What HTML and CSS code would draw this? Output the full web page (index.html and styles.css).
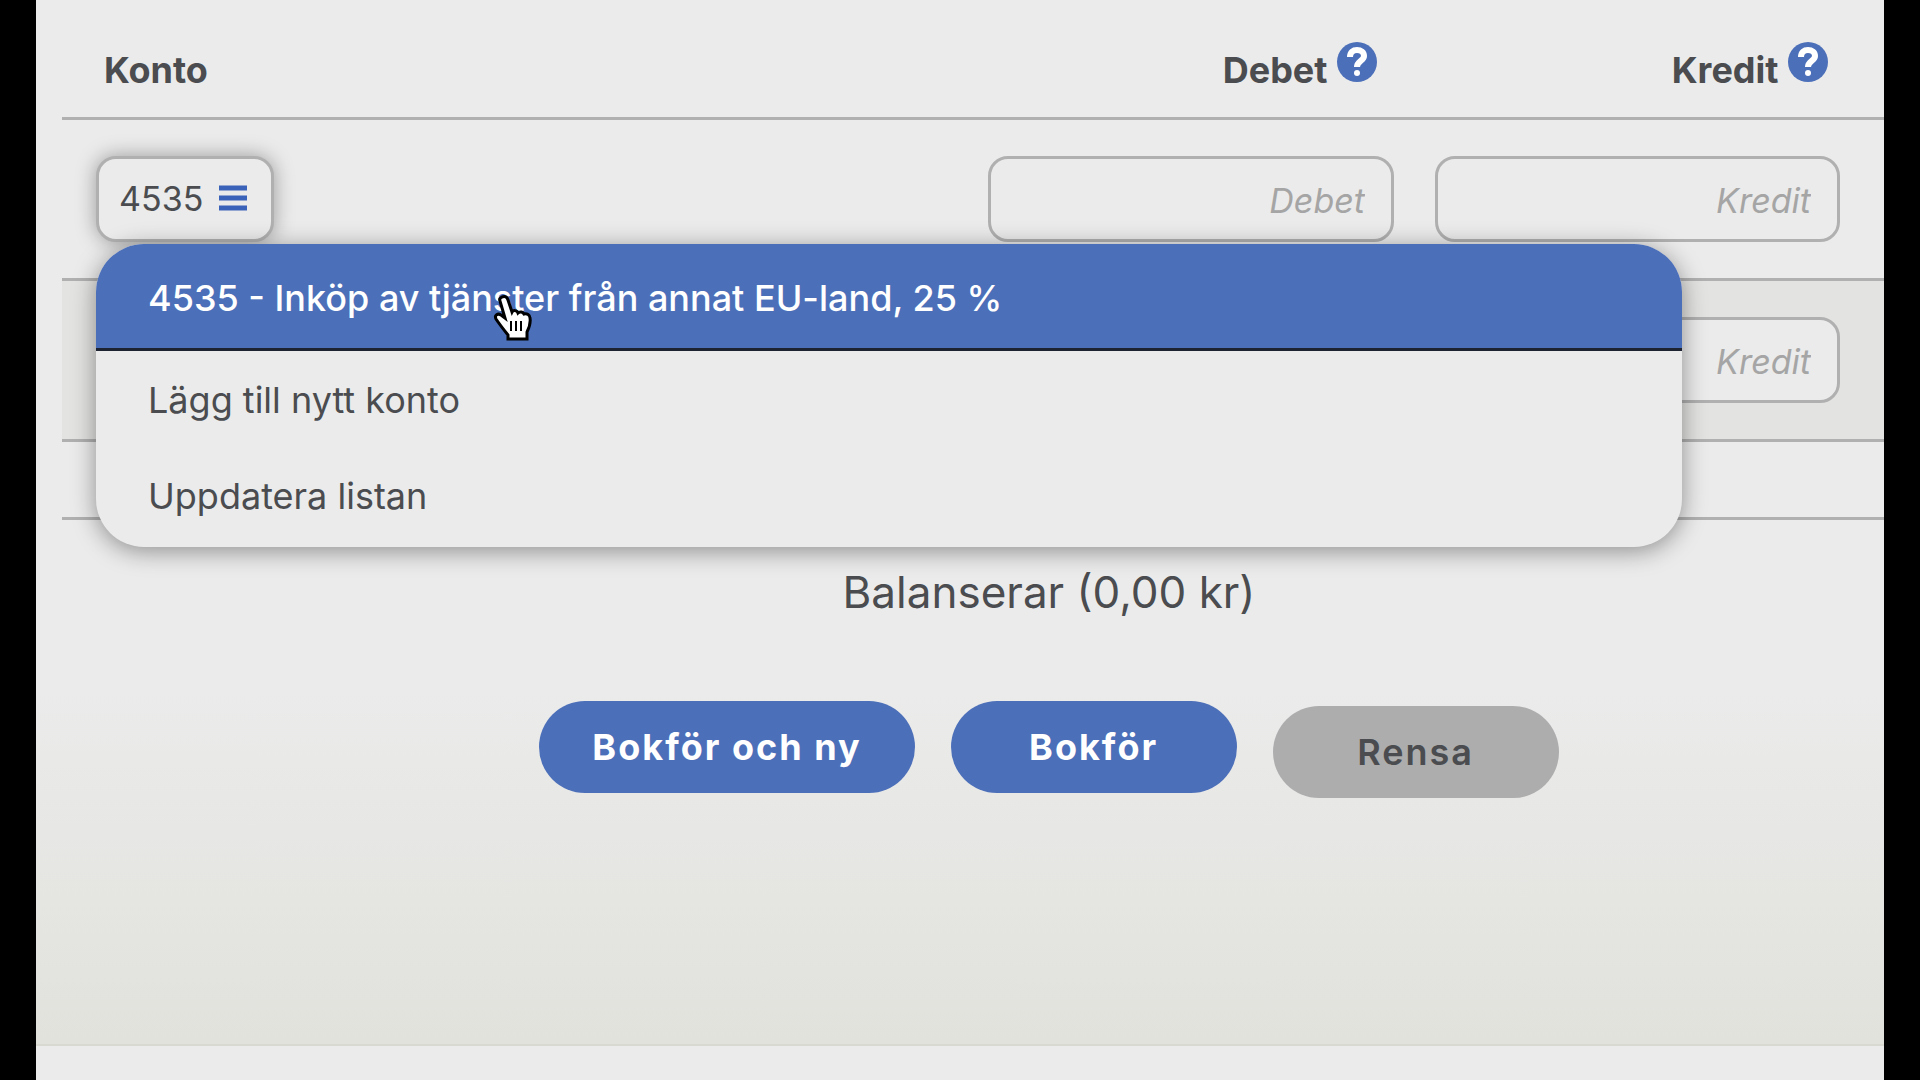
FILE: index.html
```
<!DOCTYPE html>
<html lang="sv">
    <head>
        <title>Bokför</title>
        <meta charset="utf-8" />
        <meta name="viewport" content="width=device-width, initial-scale=1.0" />
        <link rel="stylesheet" href="styles.css">
    </head>
    <body>
        <form id="main">
            <table id="rows">
                <thead>
                    <tr>
                        <th class="konto" scope="col">Konto</th>
                        <th class="debet" scope="col">Debet
                            <svg class="help" viewBox="0 0 42 42" role="img" aria-label="Hjälp">
                                <circle cx="21" cy="21" r="20" />
                                <path d="M14 16C14 11 17 9 21 9c4 0 7 2 7 6 0 5-7 5-7 11" />
                                <circle class="dot" cx="21" cy="32" r="3" />
                            </svg>
                        </th>
                        <th class="kredit" scope="col">Kredit
                            <svg class="help" viewBox="0 0 42 42" role="img" aria-label="Hjälp">
                                <circle cx="21" cy="21" r="20" />
                                <path d="M14 16C14 11 17 9 21 9c4 0 7 2 7 6 0 5-7 5-7 11" />
                                <circle class="dot" cx="21" cy="32" r="3" />
                            </svg>
                        </th>
                    </tr>
                </thead>
                <tbody>
                    <tr class="open">
                        <td>
                            <button class="account" type="button">4535
                                <svg width="28" height="28" viewBox="0 0 28 28">
                                    <path d="M0 4h28M0 14h28M0 24h28" />
                                </svg>
                            </button>
                            <div class="menu">
                                <button class="active" type="button">4535 - Inköp av tjänster från annat EU-land, 25 %</button>
                                <button type="button">Lägg till nytt konto</button>
                                <button type="button">Uppdatera listan</button>
                                <svg class="pointer" viewBox="0 0 40 48">
                                    <path d="M9 3c3-1 5 0 6 3l4 12c1-2 5-2 6 1 2-2 5-1 6 1 3-1 6 1 6 4 1 6-1 10-3 14v7H15v-4C11 36 7 31 3 25c-2-4 2-6 5-4l4 3L7 7c-1-2 0-3 2-4z" />
                                    <path class="finger" d="M18 27v10M23 27v10M28 27v10" />
                                </svg>
                            </div>
                        </td>
                        <td class="debet"><input type="text" placeholder="Debet" aria-label="Debet" /></td>
                        <td class="kredit"><input type="text" placeholder="Kredit" aria-label="Kredit" /></td>
                    </tr>
                    <tr class="odd">
                        <td></td>
                        <td class="debet"><input type="text" placeholder="Debet" aria-label="Debet" /></td>
                        <td class="kredit"><input type="text" placeholder="Kredit" aria-label="Kredit" /></td>
                    </tr>
                    <tr class="sum">
                        <td colspan="3"></td>
                    </tr>
                </tbody>
            </table>
            <div id="footer">
                <p id="balance">Balanserar (0,00 kr)</p>
                <div id="buttons">
                    <button class="save" type="button">Bokför och ny</button>
                    <button class="save" type="button">Bokför</button>
                    <button class="clear" type="reset">Rensa</button>
                </div>
            </div>
        </form>
    </body>
</html>
```
FILE: styles.css
```
* {
    box-sizing: border-box;
}
html, body {
    margin: 0px;
    padding: 0px;
    min-height: 100vh;
    background: black;
    color: #4a4c4f;
    font-family: Inter, "Liberation Sans", sans-serif;
    font-size: 36px;
}
body {
    display: flex;
    flex-direction: column;
    padding: 0px 36px;
}
body:after {
    content: "";
    flex: 1;
    background: #ebebeb;
}
button, input {
    margin: 0px;
    color: inherit;
    font-family: inherit;
    font-size: inherit;
}
button {
    cursor: pointer;
}
#main {
    padding-left: 26px;
    border-bottom: 2px solid #d8dad2;
    background: linear-gradient(#ebebeb 66%, #e1e2dc);
}
#rows {
    width: 100%;
    border-collapse: separate;
    border-spacing: 0px;
    table-layout: fixed;
}
th, td {
    padding: 0px;
    border-bottom: 3px solid #b0b0b0;
    text-align: left;
}
th {
    height: 120px;
    padding-bottom: 24px;
    vertical-align: bottom;
    font-weight: 700;
    line-height: 46px;
}
td {
    height: 161px;
    padding-left: 34px;
}
th.konto {
    padding-left: 42px;
}
.debet {
    width: 447px;
    padding-left: 20px;
    padding-right: 21px;
}
.kredit {
    width: 469px;
    padding-left: 20px;
    padding-right: 44px;
}
th.debet {
    padding-right: 37px;
    text-align: right;
}
th.kredit {
    padding-right: 55px;
    text-align: right;
}
.help {
    width: 42px;
    height: 42px;
    fill: #4c6fb9;
}
.help path {
    fill: none;
    stroke: white;
    stroke-width: 6;
}
.help .dot {
    fill: white;
}
.odd td {
    background: #e3e4e1;
}
.sum td {
    height: 78px;
}
input {
    display: block;
    width: 100%;
    height: 86px;
    padding: 2px 26px 0px;
    border: 3px solid #b0b0b0;
    border-radius: 20px;
    outline: 0;
    background: #ebebeb;
    text-align: right;
    font-size: 34px;
}
input::placeholder {
    color: #a5a5a5;
    font-style: italic;
    opacity: 1;
}
.account {
    display: flex;
    align-items: center;
    gap: 16px;
    height: 86px;
    padding: 0px 24px 2px 20px;
    border: 3px solid #b0b0b0;
    border-radius: 20px;
    background: #ebebeb;
    box-shadow: 0px 0px 20px rgba(0, 0, 0, 0.35);
    font-size: 34px;
}
.account path {
    stroke: #3a62b8;
    stroke-width: 5;
}
.open {
    position: relative;
}
.menu {
    position: absolute;
    z-index: 1;
    top: 124px;
    left: 34px;
    right: 202px;
    padding-bottom: 4px;
    border-radius: 48px;
    background: #ebebeb;
    box-shadow: 0px 4px 24px rgba(0, 0, 0, 0.4);
}
.menu button {
    display: block;
    width: 100%;
    height: 96px;
    padding: 2px 52px 0px;
    border: none;
    background: none;
    text-align: left;
}
.menu .active {
    height: 107px;
    padding-top: 4px;
    border-bottom: 3px solid #1d2330;
    border-radius: 48px 48px 0px 0px;
    background: #4c6fb9;
    color: white;
    font-weight: 500;
}
.pointer {
    position: absolute;
    top: 50px;
    left: 397px;
    width: 40px;
    height: 48px;
    fill: white;
    stroke: black;
    stroke-width: 3;
}
.pointer .finger {
    stroke-width: 2;
}
#footer {
    padding: 44px 0px 246px 152px;
    text-align: center;
}
#balance {
    margin: 0px 0px 81px;
    line-height: 56px;
    font-size: 44px;
}
#buttons {
    display: flex;
    justify-content: center;
    align-items: flex-end;
    gap: 36px;
}
#buttons button {
    min-width: 286px;
    height: 92px;
    padding: 0px 53px;
    border: none;
    border-radius: 46px;
    font-weight: 600;
    letter-spacing: 2px;
}
#buttons .save {
    margin-bottom: 5px;
    background: #4c6fb9;
    color: white;
    font-weight: 700;
}
#buttons .clear {
    background: #adadad;
}
```
